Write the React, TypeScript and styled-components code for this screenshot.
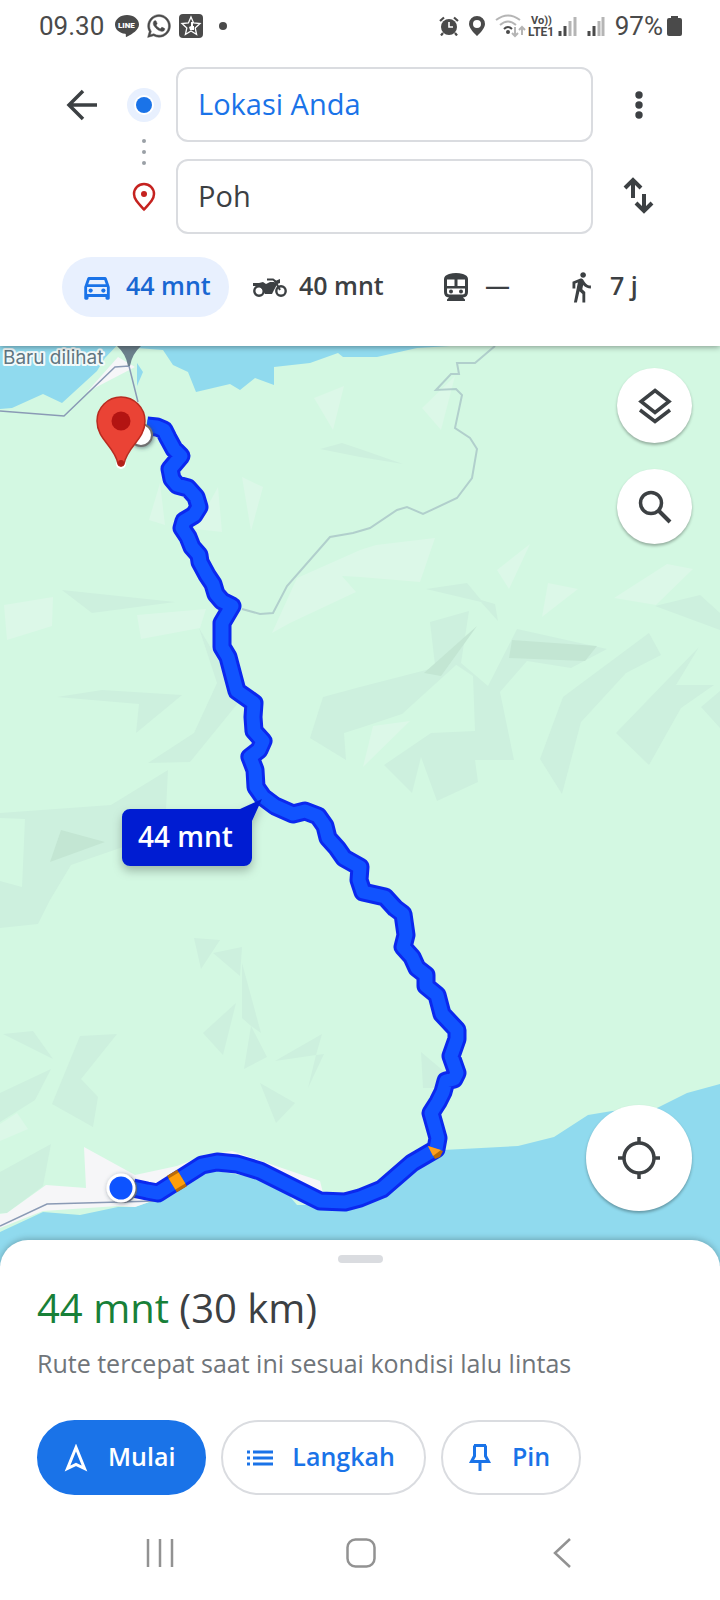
import React from "react";
import styled, { createGlobalStyle, css } from "styled-components";
import { FaWhatsapp } from "react-icons/fa";
import { MdDirectionsWalk, MdOutlineDirectionsCar } from "react-icons/md";

const ink = "#3c4043";
const blue = "#1a73e8";
const line = "#dadce0";

const GlobalStyle = createGlobalStyle`
  * { box-sizing: border-box; }
  body { margin: 0; background: #fff; color: ${ink}; font-family: "Open Sans", "Noto Sans", sans-serif; }
  button { font: inherit; color: inherit; background: none; border: 0; padding: 0; cursor: pointer; }
  svg { display: block; flex: none; }
`;

const Page = styled.div`
  display: flex;
  flex-direction: column;
  min-height: 100vh;
`;

const StatusBar = styled.div`
  position: relative;
  z-index: 2;
  display: flex;
  justify-content: space-between;
  align-items: center;
  height: 52px;
  padding: 0 38px 0 39px;
  background: #fff;
  color: #4a4a4a;
  font: 400 26px/32px Roboto, sans-serif;
`;

const StatusGroup = styled.div<{ $gap: number }>`
  display: flex;
  align-items: center;
  gap: ${(p) => p.$gap}px;
`;

const Header = styled.header`
  position: relative;
  z-index: 1;
  background: #fff;
  padding: 15px 0 29px;
  box-shadow: 0 1px 6px rgba(0, 0, 0, 0.4);
`;

const Directions = styled.form`
  display: grid;
  grid-template-columns: 76px 48px minmax(0, 1fr) 92px;
  grid-template-rows: 75px 75px;
  row-gap: 17px;
  padding: 0 35px 0 44px;
`;

const IconButton = styled.button<{ $column: number; $row: number }>`
  grid-column: ${(p) => p.$column};
  grid-row: ${(p) => p.$row};
  display: flex;
  align-items: center;
  justify-content: center;
`;

const Markers = styled.div`
  grid-column: 2;
  grid-row: 1 / 3;
  display: flex;
  flex-direction: column;
  align-items: center;
  justify-content: space-between;
  padding: 21px 0 22px;
`;

const PlaceInput = styled.input<{ $row: number; $accent?: boolean }>`
  grid-column: 3;
  grid-row: ${(p) => p.$row};
  min-width: 0;
  margin-left: 8px;
  padding: 0 20px 3px;
  border: 2px solid ${line};
  border-radius: 12px;
  background: #fff;
  color: ${(p) => (p.$accent ? blue : ink)};
  font: inherit;
  font-size: 29px;
`;

const Modes = styled.div`
  display: grid;
  grid-template-columns: 173fr 186fr 125fr 110fr;
  justify-items: start;
  margin-top: 23px;
  padding: 0 64px 0 62px;
`;

const ModeButton = styled.button<{ $selected?: boolean }>`
  display: flex;
  align-items: center;
  gap: 11px;
  height: 60px;
  padding: 0 18px 0 17px;
  border-radius: 30px;
  font-size: 25px;
  font-weight: 600;
  white-space: nowrap;
  ${(p) => p.$selected && css`background: #e8f0fe; color: #1967d2;`}
`;

const ModeIcon = styled.span`
  display: flex;
  justify-content: center;
  width: 36px;
`;

const ModeLabel = styled.span`
  padding-bottom: 4px;
`;

const MapArea = styled.main`
  position: relative;
  flex: 1 0 600px;
  background: #d3f8e2;
`;

const MapCanvas = styled.svg`
  position: absolute;
  inset: 0;
  width: 100%;
  height: 100%;
`;

const MapControls = styled.div`
  position: absolute;
  inset: 0;
  display: flex;
  flex-direction: column;
  align-items: flex-end;
  gap: 26px;
  padding: 22px 28px 55px;
`;

const RoundButton = styled.button<{ $size: number; $bottom?: boolean }>`
  display: flex;
  align-items: center;
  justify-content: center;
  width: ${(p) => p.$size}px;
  height: ${(p) => p.$size}px;
  border-radius: 50%;
  background: #fff;
  box-shadow: 0 2px 3px rgba(0, 0, 0, 0.3);
  ${(p) => p.$bottom && css`margin-top: auto;`}
`;

const Sheet = styled.section`
  position: relative;
  margin-top: -26px;
  padding: 15px 37px 10px;
  border-radius: 28px 28px 0 0;
  background: #fff;
  box-shadow: 0 -1px 6px rgba(0, 0, 0, 0.25);
`;

const Handle = styled.div`
  width: 45px;
  height: 8px;
  margin: 0 auto;
  border-radius: 4px;
  background: ${line};
`;

const Summary = styled.h1`
  margin: 20px 0 0;
  font-size: 40px;
  line-height: 50px;
  font-weight: 400;
`;

const Duration = styled.span`
  color: #188038;
`;

const Note = styled.p`
  margin: 12px 0 0;
  color: #70757a;
  font-size: 25px;
  line-height: 36px;
`;

const Actions = styled.div`
  display: flex;
  gap: 15px;
  margin-top: 39px;
`;

const ActionButton = styled.button<{ $primary?: boolean }>`
  display: flex;
  align-items: center;
  gap: 18px;
  height: 75px;
  padding: 0 29px 0 23px;
  border: 2px solid ${(p) => (p.$primary ? blue : line)};
  border-radius: 38px;
  background: ${(p) => (p.$primary ? blue : "#fff")};
  color: ${(p) => (p.$primary ? "#fff" : blue)};
  font-size: 25px;
  font-weight: 600;
`;

const ActionLabel = styled.span`
  padding-bottom: 3px;
`;

const SystemNav = styled.nav`
  position: relative;
  display: grid;
  grid-template-columns: repeat(3, 1fr);
  justify-items: center;
  align-items: center;
  height: 95px;
  padding: 0 58px 0 60px;
  background: #fff;
`;

const LIGHT = [
  "314,398 344,386 333,430", "242,477 263,487 251,531", "160,483 165,525 149,520",
  "218,487 222,532 195,529", "4,605 53,597 52,626 7,640", "137,615 206,609 200,628 141,639",
  "272,633 297,578 360,550 376,545 435,538 420,582 360,577 342,576 356,592 290,623",
  "422,408 455,376 441,430", "497,570 530,544 509,589", "548,583 578,589 542,617",
  "614,598 667,564 693,569 656,605", "373,726 410,721 363,767", "0,1124 17,1113 28,1129 0,1141",
];

const SHADE = [
  "320,449 342,443 360,449 403,464 360,457", "62,590 175,602 92,613",
  "426,589 467,583 481,600 495,604 498,621 481,602", "655,606 700,595 720,613 720,630",
  "323,697 360,687 430,669 435,665 430,622 469,611 461,663 456,665 402,714 360,728 344,733 346,760 310,738",
  "455,664 473,676 475,731 431,733 384,765 412,793 421,757 437,801 478,782 475,760 514,760 500,692 527,661 571,668 607,649 517,629 488,686 461,663",
  "649,633 661,655 626,673 581,722 562,794 540,759 563,697",
  "699,647 676,685 714,685 681,708 649,765 616,733", "720,691 701,707 720,728",
  "57,697 102,690 182,695 136,733 139,704",
  "199,628 221,665 238,703 190,762 148,763 194,733 217,683",
  "0,813 111,805 168,770 166,810 123,812 123,847 71,865 50,900 38,924 0,928 0,881 22,887 25,819 0,818",
  "194,938 220,940 201,969", "213,953 242,947 240,976", "242,963 261,1033 251,1026 242,1018",
  "236,1003 223,1055 203,1033", "251,1026 267,1057 244,1069", "275,1061 322,1034 316,1055",
  "324,1054 308,1088 316,1055", "260,1083 295,1103 276,1123",
  "80,1036 117,1034 81,1079 98,1097 93,1127 52,1104", "3,1034 33,1031 53,1059",
  "0,1093 51,1069 35,1100 0,1122", "0,1172 51,1144 43,1186 7,1213 0,1213",
  "421,1052 446,1073 437,1088 423,1088",
];

const DEEP = ["512,640 597,646 585,661 509,658", "477,626 441,676 424,673", "61,830 105,842 50,862"];

const WATER = [
  "0,340 122,340 105,358 97,371 62,403 43,394 12,408 0,409",
  "137,340 137,348 163,350 173,365 188,372 196,392 230,384 240,390 255,378 274,385 274,367 310,363 338,353 343,357 377,357 417,348 450,346 450,340",
  "137,363 143,372 137,386",
  "0,1232 43,1212 80,1215 118,1207 135,1207 149,1202 177,1190 200,1174 217,1171 257,1178 287,1193 297,1205 317,1205 345,1204 382,1189 412,1163 436,1150 443,1150 518,1146 554,1137 588,1115 612,1111 657,1108 687,1093 720,1084 720,1280 0,1280",
];

const ROUTE =
  "147,426 157,427 164,430 168,438 174,449 181,456 170,469 172,479 177,485 188,488 196,497 199,507 194,515 184,521 182,528 188,537 192,547 199,555 200,562 207,575 213,584 216,594 222,601 232,606 222,623 222,647 228,657 237,691 254,703 253,717 254,731 263,741 259,750 250,757 255,770 256,787 263,797 275,806 293,814 305,811 318,816 325,826 328,838 337,848 344,858 360,867 359,880 363,892 385,897 395,908 403,914 406,935 403,947 412,957 417,968 426,975 426,986 437,995 442,1014 457,1030 457,1039 451,1056 457,1073 454,1079 446,1081 443,1092 438,1102 431,1113 438,1138 436,1149 412,1163 382,1189 360,1198 345,1202 320,1201 260,1171 237,1164 217,1162 202,1165 158,1193 147,1191 133,1188";

const Polygons = ({ items, fill }: { items: string[]; fill: string }) => (
  <g fill={fill}>{items.map((points) => <polygon key={points} points={points} />)}</g>
);

function RouteMap() {
  return (
    <MapCanvas viewBox="0 346 720 920" preserveAspectRatio="xMidYMid slice" role="img" aria-label="Peta rute">
      <defs>
        <filter id="soft" x="-20%" y="-30%" width="140%" height="180%">
          <feDropShadow dx="0" dy="5" stdDeviation="5" floodOpacity="0.25" />
        </filter>
        <filter id="dot" x="-50%" y="-50%" width="200%" height="200%">
          <feDropShadow dx="1" dy="1" stdDeviation="2" floodColor="#345" floodOpacity="0.6" />
        </filter>
      </defs>
      <Polygons items={LIGHT} fill="#dcf8e8" />
      <Polygons items={SHADE} fill="#cdf0de" />
      <Polygons items={DEEP} fill="#c3e6d3" />
      <Polygons items={WATER} fill="#90daee" />
      <g fill="#f6f6f8">
        <polygon points="118,357 135,367 87,392" />
        <polygon points="0,1214 7,1213 46,1185 86,1188 84,1147 135,1175 177,1166 200,1157 232,1151 320,1181 323,1193 310,1193 260,1168 217,1162 160,1193 149,1202 135,1207 118,1206 43,1211 0,1228" />
      </g>
      <g fill="none" strokeWidth="1.5" stroke="#8a9ab5">
        <polyline points="0,411 64,416 115,367 129,366 138,402" />
        <polyline points="0,1226 47,1204 120,1202 155,1201" />
        <polyline stroke="#b1cfcc" strokeWidth="2" points="495,346 475,363 457,363 459,374 451,374 436,390 456,389 462,395 455,428 470,438 477,449 472,478 457,498 423,514 407,507 397,510 370,528 353,533 330,537 287,586 273,613 260,614 242,609" />
      </g>
      <path d="M115 340h28l-2 6q-9 8-11 20h-2q-2-12-11-20z" fill="#6b808c" />
      <text x="3" y="364" fontFamily="Inter, sans-serif" fontSize="19" fill="#607681" stroke="#f2fafa" strokeWidth="4" strokeLinejoin="round" paintOrder="stroke">Baru dilihat</text>
      <polyline points={ROUTE} fill="none" stroke="#0b28ee" strokeWidth="19" strokeLinejoin="round" />
      <polyline points={ROUTE} fill="none" stroke="#1153ff" strokeWidth="13" strokeLinejoin="round" />
      <path d="M182 1178 172 1184" stroke="#b96b08" strokeWidth="19" />
      <path d="M182 1178 172 1184" stroke="#ff9f0a" strokeWidth="13" />
      <path d="M428 1146 443 1151 440 1157 435 1159z" fill="#b96b08" />
      <path d="M428 1146 441 1150 433 1156z" fill="#ffa01c" />
      <circle cx="141" cy="435" r="11" fill="#fff" stroke="#707070" strokeWidth="2" filter="url(#dot)" />
      <circle cx="123" cy="1189" r="14" fill="#777c88" />
      <circle cx="121" cy="1188" r="13" fill="#1153ff" stroke="#fff" strokeWidth="3" filter="url(#dot)" />
      <circle cx="121" cy="464" r="5" fill="#fff" />
      <path d="M121 397a24 24 0 0 0-24 24c0 19 18 25 21 43 1 3 5 3 6 0 3-18 21-24 21-43a24 24 0 0 0-24-24z" fill="#ea4335" stroke="#b92b20" strokeWidth="1.5" />
      <circle cx="121" cy="421" r="9.5" fill="#b31412" />
      <circle cx="121" cy="463" r="3" fill="#b3201a" />
      <g filter="url(#soft)">
        <path d="M130 809h110l22-10-10 22v37a8 8 0 0 1-8 8H130a8 8 0 0 1-8-8v-41a8 8 0 0 1 8-8z" fill="#041fd2" />
      </g>
      <text x="138" y="847" fontFamily="Open Sans, sans-serif" fontSize="28" fontWeight="600" fill="#fff">44 mnt</text>
    </MapCanvas>
  );
}

function StatusIcons() {
  return (
    <StatusGroup $gap={10} aria-label="Status">
      <svg width="20" height="20" viewBox="0 0 20 20" fill="none" stroke="currentColor">
        <circle cx="10" cy="11" r="8" fill="currentColor" stroke="none" />
        <path d="M1 5 5 1.500M19 5 15 1.500M4 17l-2 2.500M16 17l2 2.500" strokeWidth="2.200" />
        <path d="M10 6v5h4" stroke="#fff" strokeWidth="1.600" />
      </svg>
      <svg width="16" height="20" viewBox="0 0 16 20" fill="currentColor">
        <path fillRule="evenodd" d="M8 0a8 8 0 0 0-8 8c0 5 8 12 8 12s8-7 8-12a8 8 0 0 0-8-8zm0 4a4 4 0 1 1 0 8 4 4 0 0 1 0-8z" />
      </svg>
      <svg width="82" height="24" viewBox="0 0 82 24" fill="none" stroke="#b5b5b5" strokeWidth="2">
        <path d="M1 6q12-9 24 0M5 11q8-7 16 0" />
        <path d="M9 15q4-4 8 0" stroke="currentColor" />
        <circle cx="13" cy="18" r="2" fill="currentColor" stroke="none" />
        <path d="M20 13v9m-3-3 3 3 3-3M27 21v-8m-3 3 3-3 3 3" />
        <g fill="currentColor" stroke="none" fontFamily="Roboto, sans-serif" fontWeight="700">
          <text x="36" y="10" fontSize="11">Vo))</text>
          <text x="33" y="22" fontSize="12">LTE1</text>
        </g>
        <g strokeWidth="3">
          <path d="M65 22v-5M70 22V12" stroke="currentColor" />
          <path d="M75 22V7M80 22V3" />
        </g>
      </svg>
      <svg width="18" height="24" viewBox="0 0 18 24" fill="none" stroke="#b5b5b5" strokeWidth="3">
        <path d="M2 22v-5M7 22V12" stroke="currentColor" />
        <path d="M12 22V7M16 22V3" />
      </svg>
    </StatusGroup>
  );
}

const MotorcycleIcon = () => (
  <svg width="36" height="22" viewBox="0 0 36 22" fill="none" stroke="currentColor">
    <circle cx="7" cy="15" r="4.700" strokeWidth="2.400" />
    <circle cx="29" cy="15" r="4.700" strokeWidth="2.400" />
    <path d="M1 7h6l4-1 3 2 4-2h4l3 2.500-3 5.500-2 4h-7l-3-5-3-3H1z" fill="currentColor" stroke="none" />
    <path d="M15 3.500h6l2 1.500 5 9" strokeWidth="2" />
    <path d="M22 5.500 28 3v4l-4 1.500z" fill="currentColor" stroke="none" />
  </svg>
);

const TrainIcon = () => (
  <svg width="24" height="28" viewBox="0 0 24 28" fill="currentColor">
    <path fillRule="evenodd" d="M5 1Q12-1 19 1q5 1.500 5 5v13q0 5-5 5.500l2 2V28H3v-1.500l2-2Q0 24 0 19V6q0-3.500 5-5zM3 6.500V13h7.500V6.500zm10.500 0V13H21V6.500zM3 15.500V19q0 2.500 2.500 2.500h13Q21 21.500 21 19v-3.500z" />
    <circle cx="7" cy="18.500" r="2" /><circle cx="17" cy="18.500" r="2" />
  </svg>
);

export default function App() {
  return (
    <Page>
      <GlobalStyle />
      <StatusBar>
        <StatusGroup $gap={11}>
          <span>09.30</span>
          <StatusGroup $gap={7}>
            <svg width="24" height="24" viewBox="0 0 24 24" fill="currentColor">
              <path d="M12 1C5.400 1 0 5.200 0 10.500c0 5 4.200 8.600 10.200 9.300.8.200.7 1 .6 2.200-.1 1 .7 1.100 1.500.6C17 20 24 16 24 10.500 24 5.200 18.600 1 12 1z" />
              <text x="3" y="14" fontSize="8" fontWeight="900" fontFamily="Roboto, sans-serif" fill="#fff">LINE</text>
            </svg>
            <FaWhatsapp size={26} stroke="currentColor" strokeWidth={10} />
            <svg width="24" height="24" viewBox="0 0 24 24">
              <rect width="24" height="24" rx="4" fill="currentColor" />
              <path d="m12 3 2.600 6 6.400.6-4.800 4.300 1.400 6.600L12 17l-5.600 3.500 1.400-6.600L3 9.600 9.400 9z" fill="none" stroke="#fff" strokeWidth="1.300" />
              <path d="M12 8h2v4h1v4h-4l-1-3 2-1z" fill="#fff" />
            </svg>
            <svg width="26" height="8" viewBox="0 0 26 8"><circle cx="13" cy="4" r="4" fill="currentColor" /></svg>
          </StatusGroup>
        </StatusGroup>
        <StatusGroup $gap={10}>
          <StatusIcons />
          <StatusGroup $gap={4}>
            <span>97%</span>
            <svg width="15" height="20" viewBox="0 0 15 20" fill="currentColor"><path d="M4 0h7v2h2a2 2 0 0 1 2 2v14a2 2 0 0 1-2 2H2a2 2 0 0 1-2-2V4a2 2 0 0 1 2-2h2z" /></svg>
          </StatusGroup>
        </StatusGroup>
      </StatusBar>

      <Header>
        <Directions>
          <IconButton type="button" aria-label="Kembali" $column={1} $row={1}>
            <svg width="32" height="32" viewBox="0 0 32 32" fill="none" stroke="currentColor" strokeWidth="3.500">
              <path d="M31 16H4M17 2 3 16l14 14" />
            </svg>
          </IconButton>
          <Markers>
            <svg width="34" height="34" viewBox="0 0 34 34">
              <circle cx="17" cy="17" r="17" fill="#e8f0fe" />
              <circle cx="17" cy="17" r="10" fill="#fff" />
              <circle cx="17" cy="17" r="8" fill={blue} />
            </svg>
            <svg width="4" height="28" viewBox="0 0 4 28" fill="#9aa0a6">
              <circle cx="2" cy="3" r="2" /><circle cx="2" cy="14" r="2" /><circle cx="2" cy="25" r="2" />
            </svg>
            <svg width="24" height="30" viewBox="0 0 24 30" fill="none">
              <path d="M12 2A10 10 0 0 0 2 12c0 5 4 9 10 15.500C18 21 22 17 22 12A10 10 0 0 0 12 2z" stroke="#c5221f" strokeWidth="2.500" />
              <circle cx="12" cy="12" r="3" fill="#c5221f" />
            </svg>
          </Markers>
          <PlaceInput $row={1} $accent aria-label="Titik awal" defaultValue="Lokasi Anda" />
          <PlaceInput $row={2} aria-label="Tujuan" defaultValue="Poh" />
          <IconButton type="button" aria-label="Opsi lainnya" $column={4} $row={1}>
            <svg width="8" height="28" viewBox="0 0 8 28" fill="currentColor">
              <circle cx="4" cy="4" r="3.700" /><circle cx="4" cy="14" r="3.700" /><circle cx="4" cy="24" r="3.700" />
            </svg>
          </IconButton>
          <IconButton type="button" aria-label="Tukar" $column={4} $row={2}>
            <svg width="32" height="40" viewBox="0 0 32 40" fill="none" stroke="currentColor" strokeWidth="4">
              <path d="M10 21V3M2 11l8-8 8 8M21 17v17M13 26l8 8 8-8" />
            </svg>
          </IconButton>
        </Directions>
        <Modes>
          <ModeButton type="button" aria-pressed="true" $selected>
            <ModeIcon><MdOutlineDirectionsCar size={34} color={blue} /></ModeIcon>
            <ModeLabel>44 mnt</ModeLabel>
          </ModeButton>
          <ModeButton type="button" aria-pressed="false">
            <ModeIcon><MotorcycleIcon /></ModeIcon>
            <ModeLabel>40 mnt</ModeLabel>
          </ModeButton>
          <ModeButton type="button" aria-pressed="false">
            <ModeIcon><TrainIcon /></ModeIcon>
            <ModeLabel>—</ModeLabel>
          </ModeButton>
          <ModeButton type="button" aria-pressed="false">
            <ModeIcon><MdDirectionsWalk size={34} /></ModeIcon>
            <ModeLabel>7 j</ModeLabel>
          </ModeButton>
        </Modes>
      </Header>

      <MapArea>
        <RouteMap />
        <MapControls>
          <RoundButton $size={75} aria-label="Lapisan peta">
            <svg width="34" height="36" viewBox="0 0 34 36" fill="none" stroke="currentColor" strokeWidth="3.500">
              <path d="m17 2.500 14 11-14 11-14-11zM2 22l15 11.500L32 22" />
            </svg>
          </RoundButton>
          <RoundButton $size={75} aria-label="Telusuri">
            <svg width="34" height="34" viewBox="0 0 34 34" fill="none" stroke="currentColor" strokeWidth="3.500">
              <circle cx="13" cy="13" r="10.500" /><path d="m21 21 11 11" strokeWidth="4" />
            </svg>
          </RoundButton>
          <RoundButton $size={106} $bottom aria-label="Lokasi saya">
            <svg width="42" height="42" viewBox="0 0 42 42" fill="none" stroke="currentColor" strokeWidth="3.500">
              <circle cx="21" cy="21" r="15" /><path d="M21 0v6M21 36v6M0 21h6M36 21h6" />
            </svg>
          </RoundButton>
        </MapControls>
      </MapArea>

      <Sheet>
        <Handle />
        <Summary><Duration>44 mnt</Duration> (30 km)</Summary>
        <Note>Rute tercepat saat ini sesuai kondisi lalu lintas</Note>
        <Actions>
          <ActionButton $primary>
            <svg width="28" height="28" viewBox="0 0 28 28" fill="none" stroke="currentColor" strokeWidth="3">
              <path d="M14 3.500 5.500 24.500 14 20.500l8.500 4z" />
            </svg>
            <ActionLabel>Mulai</ActionLabel>
          </ActionButton>
          <ActionButton>
            <svg width="28" height="28" viewBox="0 0 28 28" fill="none" stroke="currentColor" strokeWidth="3">
              <path d="M7 8h20M7 14h20M7 20h20M1 8h3M1 14h3M1 20h3" />
            </svg>
            <ActionLabel>Langkah</ActionLabel>
          </ActionButton>
          <ActionButton>
            <svg width="28" height="28" viewBox="0 0 28 28" fill="none" stroke="currentColor" strokeWidth="3">
              <path d="M8 1.500h12M8.500 1.500V12L5.500 17.500h17L19.500 12V1.500M14 18v9" />
            </svg>
            <ActionLabel>Pin</ActionLabel>
          </ActionButton>
        </Actions>
      </Sheet>

      <SystemNav aria-label="Navigasi sistem">
        <button aria-label="Aplikasi terbaru">
          <svg width="28" height="28" viewBox="0 0 28 28" stroke="#929292" strokeWidth="2.500"><path d="M2 0v28M14 0v28M26 0v28" /></svg>
        </button>
        <button aria-label="Beranda">
          <svg width="30" height="30" viewBox="0 0 30 30" fill="none" stroke="#929292" strokeWidth="2.500"><rect x="1.500" y="1.500" width="27" height="27" rx="8" /></svg>
        </button>
        <button aria-label="Kembali">
          <svg width="18" height="30" viewBox="0 0 18 30" fill="none" stroke="#929292" strokeWidth="2.500"><path d="M17 1 2 15l15 14" /></svg>
        </button>
      </SystemNav>
    </Page>
  );
}
